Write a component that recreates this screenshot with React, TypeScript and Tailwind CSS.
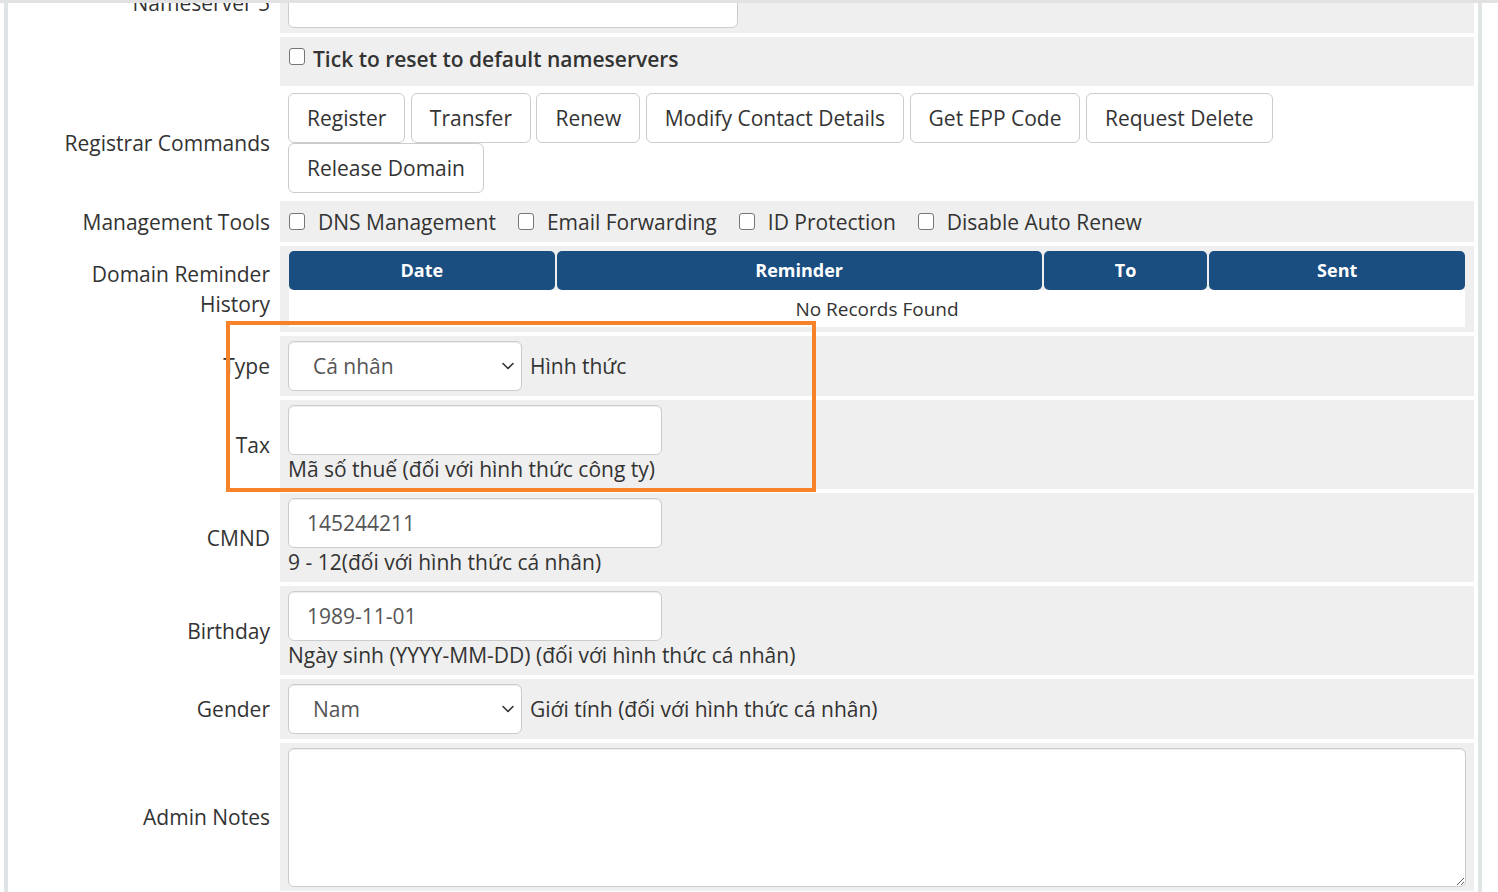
import type { ReactNode } from "react";

const commandRows = [
  ["Register", "Transfer", "Renew", "Modify Contact Details", "Get EPP Code", "Request Delete"],
  ["Release Domain"]
];

const tools = ["DNS Management", "Email Forwarding", "ID Protection", "Disable Auto Renew"];

const reminderColumns = ["Date", "Reminder", "To", "Sent"];

type RowProps = {
  label: ReactNode;
  children: ReactNode;
  fieldClass?: string;
};

function Row({ label, children, fieldClass }: RowProps) {
  return (
    <>
      <div className="flex items-center justify-end bg-white pl-[20px] pr-[10px] text-right">{label}</div>
      <div className={fieldClass ?? "bg-[#efefef] py-[5px] pl-[8px] pr-[8px]"}>{children}</div>
    </>
  );
}

function Checkbox({ className = "" }: { className?: string }) {
  return <span className={`inline-block h-[17px] w-[16px] shrink-0 rounded-[3px] border-[1.5px] border-[#767676] bg-white ${className}`} />;
}

function Select({ value }: { value: string }) {
  return (
    <div className="flex h-[50px] w-[234px] shrink-0 items-center justify-between rounded-[6px] border border-[#ccc] bg-white pl-[24px] pr-[7px] text-[#555] shadow-[inset_0_1px_1px_rgba(0,0,0,0.075)]">
      <span>{value}</span>
      <svg width="12" height="8" viewBox="0 0 12 8" fill="none">
        <path d="M1 1.5 6 6.5 11 1.5" stroke="#333" strokeWidth="1.6" strokeLinecap="round" strokeLinejoin="round" />
      </svg>
    </div>
  );
}

function TextInput({ value = "", width = "w-[374px]" }: { value?: string; width?: string }) {
  return (
    <input
      readOnly
      value={value}
      className={`block h-[50px] ${width} rounded-[6px] border border-[#ccc] bg-white px-[18px] text-[#555] shadow-[inset_0_1px_1px_rgba(0,0,0,0.075)] outline-none`}
    />
  );
}

export default function App() {
  return (
    <div className="relative h-[892px] w-[1498px] overflow-hidden bg-white font-['Open_Sans',sans-serif] text-[21px] leading-[30px] text-[#333]">
      <div className="h-[3px] bg-[#e2e2e2]" />
      <div className="ml-[4px] h-[889px] w-[1478px] overflow-hidden border-x-[4px] border-[#dfe4e7]">
        <div className="-mt-[30px] grid grid-cols-[272px_1fr] gap-y-[4px] pr-[4px]">
          <Row label="Nameserver 5">
            <TextInput width="w-[450px]" />
          </Row>

          <Row label="" fieldClass="flex h-[49px] items-center gap-[8px] bg-[#efefef] pb-[5px] pl-[9px]">
            <Checkbox className="-mt-[5px]" />
            <label className="font-semibold">Tick to reset to default nameservers</label>
          </Row>

          <Row label={<span className="-mt-[2px]">Registrar Commands</span>} fieldClass="bg-white pb-[4px] pl-[8px] pr-[8px] pt-[3px]">
            {commandRows.map((row) => (
              <div key={row[0]} className="flex gap-x-[5.5px]">
                {row.map((c) => (
                  <button key={c} className="h-[50px] rounded-[6px] border border-[#ccc] bg-white px-[18px] text-[#333]">
                    {c}
                  </button>
                ))}
              </div>
            ))}
          </Row>

          <Row label="Management Tools" fieldClass="flex h-[41px] items-center gap-x-[22px] bg-[#efefef] pl-[9px]">
            {tools.map((t) => (
              <div key={t} className="flex items-center gap-[13px]">
                <Checkbox />
                <span>{t}</span>
              </div>
            ))}
          </Row>

          <Row label={<span className="w-[200px]">Domain Reminder History</span>} fieldClass="bg-[#efefef] py-[5px] pl-[9px] pr-[9px]">
            <div className="grid grid-cols-[266fr_486fr_164fr_256fr] gap-x-[2px] text-[18px]">
              {reminderColumns.map((col) => (
                <div key={col} className="flex h-[39px] items-center justify-center rounded-[5px] bg-[#1a4d80] pb-[2px] font-bold text-white">
                  {col}
                </div>
              ))}
            </div>
            <div className="flex h-[37px] items-center justify-center bg-white text-[19px]">No Records Found</div>
          </Row>

          <Row label="Type">
            <div className="flex items-center gap-[8px]">
              <Select value="Cá nhân" />
              <span>Hình thức</span>
            </div>
          </Row>

          <Row label="Tax">
            <TextInput />
            <p className="leading-[29px]">Mã số thuế (đối với hình thức công ty)</p>
          </Row>

          <Row label="CMND">
            <TextInput value="145244211" />
            <p className="leading-[29px]">9 - 12(đối với hình thức cá nhân)</p>
          </Row>

          <Row label="Birthday">
            <TextInput value="1989-11-01" />
            <p className="leading-[29px]">Ngày sinh (YYYY-MM-DD) (đối với hình thức cá nhân)</p>
          </Row>

          <Row label="Gender">
            <div className="flex items-center gap-[8px]">
              <Select value="Nam" />
              <span>Giới tính (đối với hình thức cá nhân)</span>
            </div>
          </Row>

          <Row label="Admin Notes" fieldClass="bg-[#efefef] pb-[4px] pl-[8px] pr-[8px] pt-[5px]">
            <textarea
              readOnly
              className="block h-[139px] w-full rounded-[6px] border border-[#ccc] bg-white shadow-[inset_0_1px_1px_rgba(0,0,0,0.075)] outline-none"
            />
          </Row>
        </div>
      </div>

      {/* highlight around the type / tax fields */}
      <div className="absolute left-[226px] top-[321px] h-[171px] w-[590px] border-[4px] border-[#f7822a]" />
    </div>
  );
}
